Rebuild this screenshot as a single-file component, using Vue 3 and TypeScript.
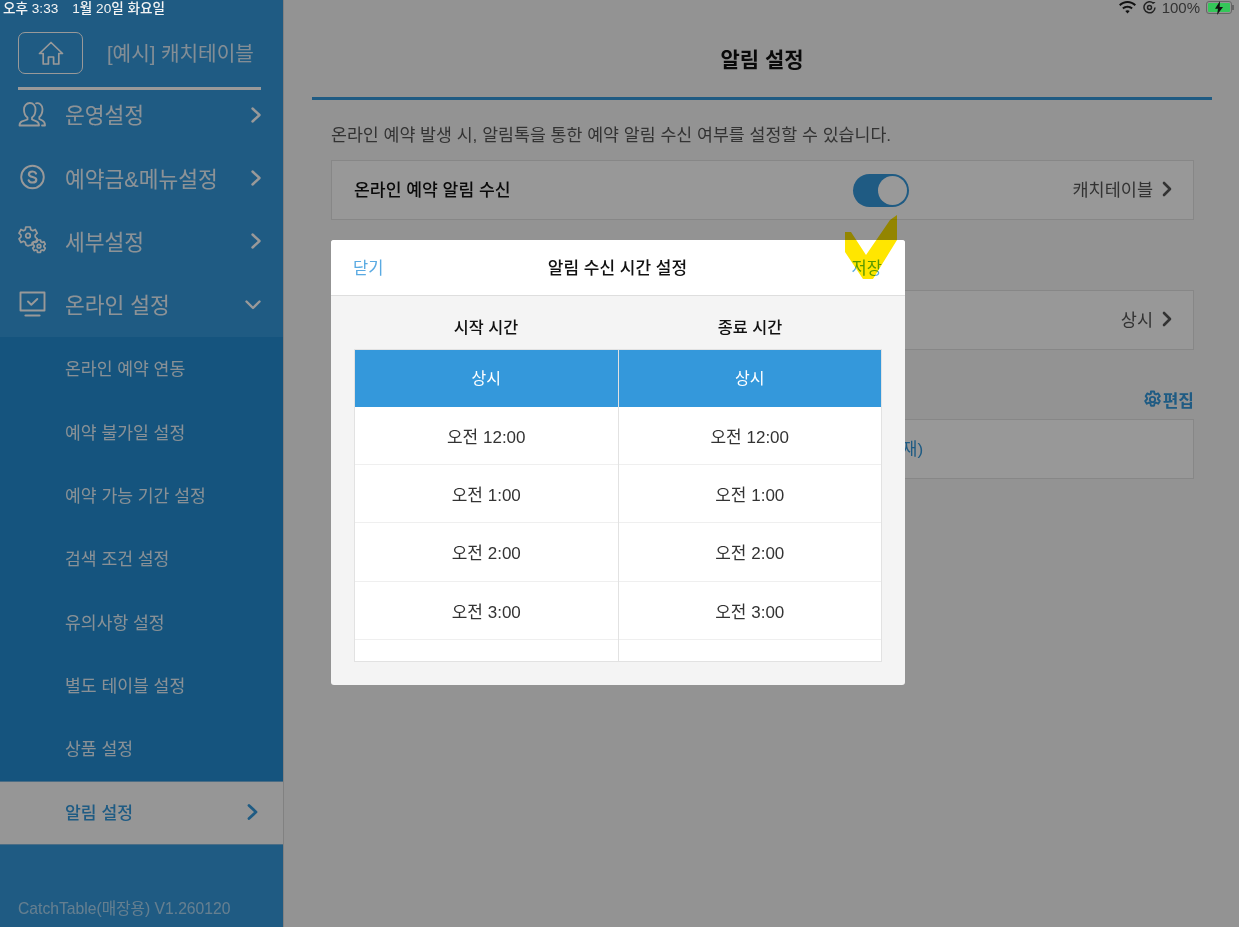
<script setup lang="ts">
interface MenuItem { label: string; icon: string; open?: boolean }
const menu: MenuItem[] = [
  { label: '운영설정', icon: 'people' },
  { label: '예약금&메뉴설정', icon: 'coin' },
  { label: '세부설정', icon: 'gears' },
  { label: '온라인 설정', icon: 'monitor', open: true },
]
const subs = ['온라인 예약 연동', '예약 불가일 설정', '예약 가능 기간 설정', '검색 조건 설정', '유의사항 설정', '별도 테이블 설정', '상품 설정']
const times = ['오전 12:00', '오전 1:00', '오전 2:00', '오전 3:00']
const gear = 'M8.300 1.500h3.400l.5 2.500 1.500.7 2.300-1.100 1.700 2.900-1.900 1.700v1.600l1.900 1.700-1.700 2.900-2.300-1.100-1.500.7-.5 2.500H8.300l-.5-2.500-1.500-.7-2.300 1.100-1.700-2.900 1.900-1.700V8.200L2.800 6.500l1.700-2.900 2.300 1.100 1.500-.7z'
</script>

<template>
  <div class="page">
    <aside class="side">
      <div class="brand">
        <div class="home">
          <svg width="26" height="26" viewBox="0 0 26 26" fill="none" stroke="currentColor" stroke-width="1.7" stroke-linejoin="round" stroke-linecap="round">
            <path d="M1.500 13.500 13 2.500l11.500 11h-3.700V24h-5.200v-7h-5.200v7H5.200V13.500z" />
          </svg>
        </div>
        <span class="store">[예시] 캐치테이블</span>
      </div>
      <nav class="nav">
        <div v-for="m in menu" :key="m.label" class="item">
          <span class="ico">
            <svg v-if="m.icon === 'people'" width="28" height="28" viewBox="0 0 28 28" fill="none" stroke="currentColor" stroke-width="1.8" stroke-linejoin="round" stroke-linecap="round">
              <path d="M9.500 17.500C7.200 16 6 12.800 6 9.500 6 5.800 8.500 3 11.800 3s5.700 2.800 5.700 6.500c0 3.300-1.200 6.500-3.500 8v2l4.500 1.800c1.700.7 2.500 1.800 2.500 4.200H1.500c0-2.400.8-3.500 2.500-4.200l5.500-1.800z" />
              <path d="M18 3.300c3.200-.8 6.500 1.700 6.500 5.700 0 3.200-1 6.300-3.200 8v2l3 1.500c1.600.8 2.700 2 2.700 5h-3" />
            </svg>
            <svg v-else-if="m.icon === 'coin'" width="28" height="28" viewBox="0 0 28 28" fill="none" stroke="currentColor" stroke-width="1.9" stroke-linecap="round">
              <circle cx="14.500" cy="14" r="11.300" />
              <path d="M18 10.500c-.6-1.300-2-2-3.500-2-2 0-3.600 1-3.600 2.700 0 3.700 7.400 1.800 7.400 5.500 0 1.800-1.700 2.800-3.800 2.800-1.700 0-3.200-.7-3.800-2.200" stroke-width="2.200" />
            </svg>
            <svg v-else-if="m.icon === 'gears'" width="28" height="28" viewBox="0 0 28 28" fill="none" stroke="currentColor" stroke-width="1.700" stroke-linejoin="round">
              <path d="M7.800 1.500h4.400l.6 2.700 1.900 1 2.500-1.200 2 3.600-2 1.900v2l2 1.900-1.300 2.400-2 .5-1.600.8-.5 2.400h-1l-2.800.9-2-.9-.7-2.700-1.800-1-2.500 1.200-2-3.600 2-1.900v-2l-2-1.900 2-3.600 2.500 1.200 1.800-1z" transform="translate(0 -.5)" />
              <circle cx="10" cy="9.700" r="2.300" />
              <path d="M19.500 14h3l.4 1.800 1.300.7 1.700-.8 1.400 2.500-1.400 1.300v1.400l1.400 1.300-1.400 2.500-1.700-.8-1.300.7-.4 1.800h-3l-.4-1.800-1.300-.7-1.700.8-1.400-2.500 1.400-1.300V19.500l-1.400-1.300 1.400-2.500 1.700.8 1.300-.7z" />
              <circle cx="21" cy="20.200" r="1.800" />
            </svg>
            <svg v-else width="28" height="28" viewBox="0 0 28 28" fill="none" stroke="currentColor" stroke-width="1.900" stroke-linecap="round" stroke-linejoin="round">
              <rect x="2.500" y="2.500" width="24" height="18" />
              <path d="M10 11.500l3.300 3.200 6-5.700" />
              <path d="M7.500 25.500h14" stroke-width="2.200" />
            </svg>
          </span>
          <span class="label">{{ m.label }}</span>
          <svg v-if="m.open" class="chev" width="18" height="18" viewBox="0 0 18 18" fill="none" stroke="currentColor" stroke-width="2.400" stroke-linecap="round" stroke-linejoin="round"><path d="M-1.500 5.500 5 12l6.500-6.500" /></svg>
          <svg v-else class="chev" width="18" height="18" viewBox="0 0 18 18" fill="none" stroke="currentColor" stroke-width="2.400" stroke-linecap="round" stroke-linejoin="round"><path d="M4.500 2.500 11.500 9l-7 6.500" /></svg>
        </div>
      </nav>
      <ul class="subs">
        <li v-for="s in subs" :key="s" class="sub">{{ s }}</li>
        <li class="sub current">
          <span>알림 설정</span>
          <svg width="18" height="18" viewBox="0 0 18 18" fill="none" stroke="currentColor" stroke-width="2.800" stroke-linecap="round" stroke-linejoin="round"><path d="M5 2.500 12 9l-7 6.500" /></svg>
        </li>
      </ul>
      <div class="version">CatchTable(매장용) V1.260120</div>
    </aside>

    <main class="main">
      <header class="head"><h1>알림 설정</h1></header>
      <section class="content">
        <p class="desc">온라인 예약 발생 시, 알림톡을 통한 예약 알림 수신 여부를 설정할 수 있습니다.</p>
        <div class="row first">
          <span class="row-title">온라인 예약 알림 수신</span>
          <span class="toggle"><i></i></span>
          <span class="row-val">캐치테이블 <svg width="14" height="16" viewBox="0 0 14 16" fill="none" stroke="currentColor" stroke-width="2.600" stroke-linecap="round" stroke-linejoin="round"><path d="M4 2l6 6-6 6" /></svg></span>
        </div>
        <div class="row second">
          <span class="row-title">수신 시간 설정</span>
          <span class="row-val">상시 <svg width="14" height="16" viewBox="0 0 14 16" fill="none" stroke="currentColor" stroke-width="2.600" stroke-linecap="round" stroke-linejoin="round"><path d="M4 2l6 6-6 6" /></svg></span>
        </div>
        <div class="edit-line">
          <span class="edit">
            <svg width="19" height="19" viewBox="0 0 20 20" fill="none" stroke="currentColor" stroke-width="2" stroke-linejoin="round">
              <path :d="gear" /><circle cx="10" cy="10" r="2.800" />
            </svg>편집
          </span>
        </div>
        <div class="row third"><span class="link">수신 번호를 등록해 주세요 (담당자 번호 기재)</span></div>
      </section>
    </main>

    <div class="overlay"></div>

    <div class="status">
      <span class="status-left"><span>오후 3:33</span><span>1월 20일 화요일</span></span>
      <span class="status-right">
        <svg class="wifi" width="17" height="13" viewBox="0 0 17 13" fill="#111"><path d="M8.500 0C5.200 0 2.300 1.300 0 3.500L1.400 5C3.300 3.200 5.800 2.100 8.500 2.100s5.200 1.100 7.100 2.900L17 3.500C14.700 1.300 11.800 0 8.500 0zM3.200 6.800l1.500 1.500c1-1 2.400-1.500 3.800-1.500s2.800.5 3.800 1.500l1.500-1.500C12.400 5.500 10.500 4.700 8.500 4.700s-3.900.8-5.300 2.100zM6.300 10l2.200 2.500 2.200-2.500c-.6-.5-1.400-.8-2.200-.8s-1.600.3-2.200.8z" /></svg>
        <svg width="13" height="13" viewBox="0 0 13 13" fill="none" stroke="#222" stroke-width="1.500"><path d="M10.500 2.500A5.500 5.500 0 1 0 12 6.500" /><path d="M9 1l1.800 1.800L12.500 1z" fill="#222" stroke="none" /><circle cx="6.500" cy="6.500" r="2" /></svg>
        <span class="pct">100%</span>
        <span class="batt"><i></i><svg width="10" height="14" viewBox="0 0 10 14" fill="#111"><path d="M6 0 1 7.700h3L3 14l6-8H5.700z" /></svg></span>
      </span>
    </div>

    <div class="modal">
      <div class="m-head">
        <span class="m-link">닫기</span>
        <b>알림 수신 시간 설정</b>
        <span class="m-link">저장</span>
      </div>
      <div class="m-body">
        <div class="cols-title"><b>시작 시간</b><b>종료 시간</b></div>
        <div class="picker">
          <div v-for="c in 2" :key="c" class="col">
            <div class="cell active">상시</div>
            <div v-for="t in times" :key="t" class="cell">{{ t }}</div>
            <div class="cell tail"></div>
          </div>
        </div>
      </div>
    </div>

    <svg class="marker" width="52" height="65" viewBox="0 0 52 65">
      <path d="M0 17h6l15 23L45 5l7-5v25L28 64H18L0 37z" fill="#ffe600" />
    </svg>
  </div>
</template>

<style>
html, body { margin: 0; background: #fff; }
</style>

<style scoped>
.page {
  position: relative;
  width: 1239px;
  height: 927px;
  overflow: hidden;
  display: flex;
  background: #f6f6f6;
  font-family: "Liberation Sans", "Noto Sans CJK KR", sans-serif;
  color: #222;
}
.side {
  width: 283px;
  flex: none;
  display: flex;
  flex-direction: column;
  background: #3498db;
  color: #fff;
  border-right: 1px solid #d8d8d8;
}
.brand {
  margin: 0 22px 0 18px;
  padding-top: 32px;
  height: 55px;
  display: flex;
  align-items: flex-start;
  gap: 24px;
  border-bottom: 3px solid #fff;
}
.home {
  width: 63px;
  height: 40px;
  border: 1.500px solid #fff;
  border-radius: 7px;
  display: flex;
  align-items: center;
  justify-content: center;
}
.store { font-size: 20.200px; line-height: 44px; opacity: .82; }
.nav { margin: -8px 0 1.400px; }
.item {
  height: 63.400px;
  display: flex;
  align-items: center;
  padding: 0 17px 0 18px;
}
.ico { width: 47px; height: 28px; display: flex; flex: none; }
.label { flex: 1; font-size: 21.500px; opacity: .9; }
.chev { overflow: visible; margin-top: 2px; }
.subs {
  list-style: none;
  margin: 0;
  padding: 0;
  background: #238dd2;
}
.sub {
  height: 63.400px;
  display: flex;
  align-items: center;
  justify-content: space-between;
  padding: 0 21px 2px 65px;
  box-sizing: border-box;
  font-size: 17.200px;
  color: rgba(255, 255, 255, .88);
}
.sub.current {
  height: 64px;
  background: #fafafa;
  color: #3498db;
  border-top: 1px solid #7db6de;
  border-bottom: 1px solid #7db6de;
  font-weight: 500;
}
.version {
  margin-top: auto;
  padding: 0 0 8px 18px;
  font-size: 15.700px;
  color: rgba(255, 255, 255, .58);
}
.main { flex: 1; padding: 0 27px 0 28px; min-width: 0; }
.head {
  height: 100px;
  border-bottom: 3.500px solid #3498db;
  display: flex;
  align-items: center;
  justify-content: center;
  padding-top: 18px;
  box-sizing: border-box;
}
.head h1 { margin: 0; font-size: 21px; font-weight: 700; color: #111; }
.content { padding: 0 18px 0 19px; }
.desc { margin: 0; padding-top: 23px; height: 37px; line-height: 24px; font-size: 17.300px; color: #555; }
.row {
  position: relative;
  display: flex;
  align-items: center;
  border: 1px solid #e2e2e2;
  background: #fdfdfd;
  padding: 0 19px 3px 22px;
  box-sizing: border-box;
  height: 60px;
  font-size: 17.200px;
}
.first { justify-content: space-between; }
.second { margin-top: 70px; justify-content: space-between; }
.third { justify-content: center; padding: 0 0 3px; }
.row-title { color: #111; font-weight: 500; }
.row-val { display: flex; align-items: center; gap: 7px; color: #555; font-size: 17.500px; }
.row-val svg { margin-top: 1px; }
.toggle {
  position: absolute;
  left: 521px;
  top: 13px;
  width: 56px;
  height: 33px;
  box-sizing: border-box;
  border-radius: 17px;
  background: #3498db;
  display: flex;
  justify-content: flex-end;
  padding: 2px;
}
.toggle i { width: 29px; height: 29px; border-radius: 50%; background: #fff; }
.edit-line { display: flex; justify-content: flex-end; height: 69px; align-items: flex-end; padding-bottom: 7px; box-sizing: border-box; }
.edit { display: flex; align-items: center; gap: 1px; font-size: 17px; font-weight: 700; color: #3498db; }
.link { color: #3498db; font-size: 17px; }
.overlay { position: absolute; inset: 0; background: rgba(0, 0, 0, .4); }
.status {
  position: absolute;
  left: 0;
  right: 0;
  top: 0;
  height: 14px;
  display: flex;
  justify-content: space-between;
  align-items: center;
  padding: 0 7px 0 3px;
  font-size: 13.600px;
  font-weight: 500;
}
.status-left { display: flex; gap: 14px; color: #f4f4f4; }
.status-right { display: flex; align-items: center; gap: 6px; color: #333; }
.wifi { margin-right: 1px; }
.pct { font-size: 15px; }
.batt {
  position: relative;
  width: 26px;
  height: 13px;
  box-sizing: border-box;
  border: 1px solid #666;
  border-radius: 3px;
  padding: 1px;
  display: flex;
}
.batt::after {
  content: "";
  position: absolute;
  right: -3px;
  top: 3px;
  width: 2px;
  height: 5px;
  background: #666;
}
.batt i { flex: 1; background: #35c759; border-radius: 1px; }
.batt svg { position: absolute; left: 7px; top: -1px; }
.modal {
  position: absolute;
  left: 331px;
  top: 240px;
  width: 574px;
  height: 445px;
  border-radius: 3px;
  overflow: hidden;
  background: #f4f4f4;
  display: flex;
  flex-direction: column;
}
.m-head {
  height: 55px;
  flex: none;
  background: #fff;
  border-bottom: 1px solid #dedede;
  display: flex;
  align-items: center;
  justify-content: space-between;
  padding: 0 23px 2px 22px;
  box-sizing: content-box;
  height: 53px;
  font-size: 17px;
  color: #111;
}
.m-head b { font-weight: 500; }
.m-link { color: #5aaae2; font-size: 16.500px; }
.m-body { padding: 0 23px; flex: 1; }
.cols-title { display: flex; height: 53px; box-sizing: border-box; padding-top: 6px; align-items: center; }
.cols-title b { flex: 1; text-align: center; font-size: 16.300px; font-weight: 500; color: #111; }
.picker {
  display: flex;
  height: 313px;
  overflow: hidden;
  border: 1px solid #e2e2e2;
  box-sizing: border-box;
  background: #fff;
}
.col { flex: 1; }
.col + .col { border-left: 1px solid #e2e2e2; }
.cell {
  height: 58.200px;
  display: flex;
  align-items: center;
  justify-content: center;
  font-size: 17px;
  color: #333;
  border-bottom: 1px solid #efefef;
  box-sizing: border-box;
}
.cell.active { background: #3498db; color: #fff; height: 57px; border-bottom: 0; padding-bottom: 3px; font-size: 16px; }
.cell.tail { border-bottom: 0; }
.marker { position: absolute; left: 845px; top: 215px; pointer-events: none; mix-blend-mode: multiply; }
</style>
